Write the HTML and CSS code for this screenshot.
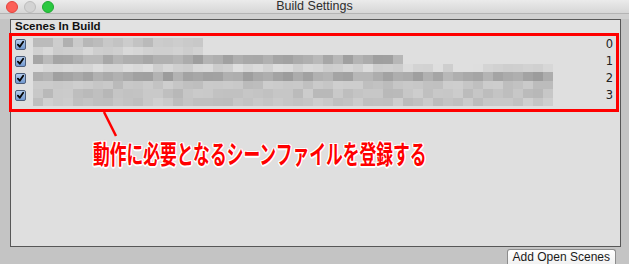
FILE: index.html
```html
<!DOCTYPE html>
<html lang="ja">
<head>
    <meta charset="UTF-8">
    <meta name="viewport" content="width=device-width, initial-scale=1.0">
    <title>Build Settings</title>
    <link rel="stylesheet" href="styles.css">
</head>
<body>
    <div class="titlebar">
        <div class="lights">
            <span class="light light-close"></span>
            <span class="light light-min"></span>
            <span class="light light-max"></span>
        </div>
        <div class="window-title">Build Settings</div>
        <div></div>
    </div>
    <div class="toolstrip"></div>

    <div class="main">
        <div class="panel">
            <div class="panel-header">Scenes In Build</div>
            <div class="scene-list">
                <div class="scene-row">
                    <span class="check"><svg viewBox="0 0 11 11"><path d="M2.3 5.6 L4.6 8.2 L8.8 2.2"/></svg></span>
                    <div class="blur">
                        <div class="blur-line" data-len="17" data-tone="190" data-spread="34" data-seed="3"></div>
                        <div class="blur-line" data-len="17" data-tone="212" data-spread="20" data-seed="7"></div>
                    </div>
                    <span class="scene-index">0</span>
                </div>
                <div class="scene-row">
                    <span class="check"><svg viewBox="0 0 11 11"><path d="M2.3 5.6 L4.6 8.2 L8.8 2.2"/></svg></span>
                    <div class="blur">
                        <div class="blur-line" data-len="37" data-tone="172" data-spread="30" data-seed="11"></div>
                        <div class="blur-line" data-len="52" data-tone="214" data-spread="20" data-seed="5"></div>
                    </div>
                    <span class="scene-index">1</span>
                </div>
                <div class="scene-row">
                    <span class="check"><svg viewBox="0 0 11 11"><path d="M2.3 5.6 L4.6 8.2 L8.8 2.2"/></svg></span>
                    <div class="blur">
                        <div class="blur-line" data-len="52" data-tone="170" data-spread="28" data-seed="2"></div>
                        <div class="blur-line" data-len="52" data-tone="196" data-spread="22" data-seed="9"></div>
                    </div>
                    <span class="scene-index">2</span>
                </div>
                <div class="scene-row">
                    <span class="check"><svg viewBox="0 0 11 11"><path d="M2.3 5.6 L4.6 8.2 L8.8 2.2"/></svg></span>
                    <div class="blur">
                        <div class="blur-line" data-len="52" data-tone="194" data-spread="22" data-seed="13"></div>
                        <div class="blur-line" data-len="52" data-tone="198" data-spread="20" data-seed="4"></div>
                    </div>
                    <span class="scene-index">3</span>
                </div>
            </div>

            <!-- annotation over the screenshot -->
            <div class="note-box"></div>
            <svg class="note-line" width="20" height="30" viewBox="0 0 20 30">
                <line x1="2" y1="1" x2="14" y2="25"/>
            </svg>
            <div class="note-text">動作に必要となるシーンファイルを登録する</div>
        </div>
        <div class="footer">
            <button class="add-button">Add Open Scenes</button>
        </div>
    </div>

    <script>
        document.querySelectorAll('.blur-line').forEach(line => {
            const len = parseInt(line.dataset.len);
            const tone = parseInt(line.dataset.tone);
            const spread = parseInt(line.dataset.spread);
            let seed = parseInt(line.dataset.seed) * 7919;
            for (let i = 0; i < len; i++) {
                seed = (seed * 9301 + 49297) % 233280;
                const g = Math.min(226, Math.round(tone + (seed / 233280 - 0.5) * spread));
                const cell = document.createElement('span');
                cell.className = 'blur-cell';
                cell.style.background = `rgb(${g}, ${g}, ${g})`;
                line.appendChild(cell);
            }
        });
    </script>
</body>
</html>
```

FILE: styles.css
```css
* {
    box-sizing: border-box;
}

body {
    margin: 0;
    width: 629px;
    height: 264px;
    overflow: hidden;
    background-color: #c4c4c4;
    font-family: "Liberation Sans", Arial, sans-serif;
    color: #1e1e1e;
}

.titlebar {
    height: 14px;
    display: grid;
    grid-template-columns: 1fr auto 1fr;
    align-items: center;
    background: linear-gradient(#ebebeb, #d6d6d6);
    border-bottom: 1px solid #b4b4b4;
}

.lights {
    display: flex;
    gap: 6px;
    padding-left: 6px;
    margin-top: 1px;
}

.light {
    width: 12px;
    height: 12px;
    border-radius: 50%;
}

.light-close {
    background-color: #fc5f57;
    border: 1px solid #e0443e;
}

.light-min {
    background-color: #d3d3d3;
    border: 1px solid #bdbdbd;
}

.light-max {
    background-color: #2ac840;
    border: 1px solid #1ea932;
}

.window-title {
    font-size: 12.5px;
    color: #2e2e2e;
    line-height: 13px;
}

.toolstrip {
    height: 5px;
    background-color: #d0d0d0;
}

.main {
    padding: 0 8px 0 10px;
}

.panel {
    position: relative;
    height: 228px;
    background-color: #dfdfdf;
    border: 1px solid #575757;
}

.panel-header {
    height: 14px;
    padding-left: 4px;
    font-size: 11.5px;
    font-weight: bold;
    line-height: 13px;
    color: #111;
    background-color: #e2e2e2;
}

.scene-list {
    padding: 4px 7px 0 4px;
}

.scene-row {
    display: flex;
    align-items: flex-start;
    height: 17px;
}

.check {
    width: 11px;
    height: 11px;
    margin-top: 1px;
    border: 1px solid #4c5d7a;
    border-radius: 2px;
    background: linear-gradient(#b4cdee, #7198cf);
}

.check svg {
    display: block;
    width: 100%;
    height: 100%;
    overflow: visible;
}

.check path {
    fill: none;
    stroke: #050505;
    stroke-width: 2.2;
    stroke-linecap: round;
    stroke-linejoin: round;
}

.blur {
    flex: 1;
    margin-left: 7px;
}

.blur-line {
    display: flex;
    height: 8.5px;
}

.blur-cell {
    width: 10px;
    height: 100%;
}

.scene-index {
    font-family: "DejaVu Sans", sans-serif;
    font-size: 11.5px;
    line-height: 12px;
    color: #222;
}

.note-box {
    position: absolute;
    left: -2px;
    top: 13px;
    width: 610px;
    height: 79px;
    border: 3px solid #ff0000;
}

.note-line {
    position: absolute;
    left: 91px;
    top: 91px;
}

.note-line line {
    stroke: #ff0000;
    stroke-width: 2.5;
}

.note-text {
    position: absolute;
    left: 82px;
    top: 118px;
    font-family: "Noto Sans CJK JP", sans-serif;
    font-size: 26px;
    font-weight: bold;
    line-height: 30px;
    white-space: nowrap;
    color: #ff0000;
    transform: scaleX(0.645);
    transform-origin: left top;
    text-shadow:
        2px 0 0 #fff, -2px 0 0 #fff, 0 1.5px 0 #fff, 0 -1.5px 0 #fff,
        1.5px 1px 0 #fff, -1.5px 1px 0 #fff, 1.5px -1px 0 #fff, -1.5px -1px 0 #fff,
        0 0 2px #ff3030;
}

.footer {
    display: flex;
    justify-content: flex-end;
    padding: 2px 5px 0 0;
}

.add-button {
    height: 15px;
    padding: 0 5px;
    font-family: "Liberation Sans", Arial, sans-serif;
    font-size: 12px;
    line-height: 13px;
    color: #1a1a1a;
    background: linear-gradient(#ffffff, #f1f1f1);
    border: 1px solid #8c8c8c;
    border-bottom: none;
    border-radius: 3px 3px 0 0;
}
```
